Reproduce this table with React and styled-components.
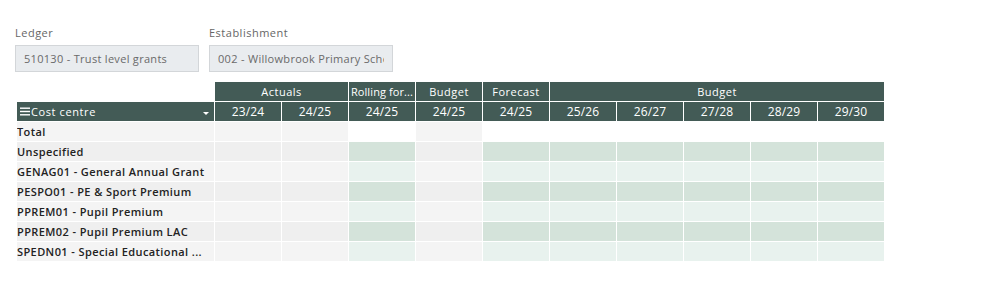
import React from "react";
import styled, { createGlobalStyle } from "styled-components";

const Global = createGlobalStyle`
  html, body { margin: 0; padding: 0; background: #fff; }
  body { font-family: "Open Sans", "Liberation Sans", sans-serif; }
`;

const Page = styled.div`
  padding: 26px 0 0 15px;
`;

const Filters = styled.div`
  display: flex;
  gap: 10px;
`;

const Field = styled.div`
  display: flex;
  flex-direction: column;
  width: 184px;
`;

const Label = styled.div`
  font-size: 11px;
  line-height: 14px;
  letter-spacing: 0.5px;
  color: #666;
  margin-bottom: 5px;
`;

const Input = styled.div`
  box-sizing: border-box;
  height: 27px;
  border: 1px solid #d3d6d9;
  background: #e9ecef;
  color: #6a6a6a;
  font-size: 11px;
  line-height: 25px;
  letter-spacing: 0.3px;
  padding: 0 8px;
`;

const InputText = styled.div`
  white-space: nowrap;
  overflow: hidden;
`;

const Grid = styled.div`
  margin: 10px 0 0 2px;
  display: grid;
  grid-template-columns: 197px repeat(10, 66px);
  grid-auto-rows: 19px;
  gap: 1px;
`;

const HeadCell = styled.div`
  grid-column: span ${(p) => p.$span || 1};
  background: ${(p) => (p.$blank ? "transparent" : "#435b56")};
  color: #fff;
  font-size: ${(p) => (p.$big ? "12px" : "11px")};
  letter-spacing: ${(p) => (p.$big ? "0.1px" : p.$tight ? "0.1px" : "0.5px")};
  line-height: 19px;
  text-align: center;
  white-space: nowrap;
  overflow: hidden;
`;

const CostHead = styled.div`
  background: #435b56;
  color: #fff;
  font-size: 11px;
  letter-spacing: 0.6px;
  line-height: 19px;
  display: flex;
  align-items: center;
  padding: 0 4px 0 3px;
  gap: 1px;
`;

const CostText = styled.span`
  flex: 1;
`;

const Caret = styled.span`
  width: 0;
  height: 0;
  border-left: 3px solid transparent;
  border-right: 3px solid transparent;
  border-top: 3px solid #fff;
  margin-right: 1px;
  margin-top: 3px;
`;

const RowLabel = styled.div`
  background: ${(p) => p.$bg};
  color: #222;
  font-size: 11px;
  font-weight: 600;
  letter-spacing: 0.4px;
  line-height: 19px;
  white-space: nowrap;
  overflow: hidden;
`;

const Cell = styled.div`
  background: ${(p) => p.$bg};
`;

const rows = [
  "Total",
  "Unspecified",
  "GENAG01 - General Annual Grant",
  "PESPO01 - PE & Sport Premium",
  "PPREM01 - Pupil Premium",
  "PPREM02 - Pupil Premium LAC",
  "SPEDN01 - Special Educational ...",
];

const years = ["23/24", "24/25", "24/25", "24/25", "24/25", "25/26", "26/27", "27/28", "28/29", "29/30"];
// column kinds: g = gray (actual/budget), e = editable green
const kinds = ["g", "g", "e", "g", "e", "e", "e", "e", "e", "e"];

function cellColor(rowIdx, kind) {
  if (rowIdx === 0) return kind === "g" ? "#f4f4f4" : "#ffffff";
  const dark = rowIdx % 2 === 1;
  if (kind === "g") return dark ? "#efefef" : "#f4f4f4";
  return dark ? "#d4e3da" : "#e8f2ee";
}

const Burger = () => (
  <svg width="10" height="9" viewBox="0 0 10 9">
    <rect x="0" y="0.5" width="10" height="1.4" fill="#fff" />
    <rect x="0" y="3.8" width="10" height="1.4" fill="#fff" />
    <rect x="0" y="7.1" width="10" height="1.4" fill="#fff" />
  </svg>
);

export default function App() {
  return (
    <Page>
      <Global />
      <Filters>
        <Field>
          <Label>Ledger</Label>
          <Input>
            <InputText>510130 - Trust level grants</InputText>
          </Input>
        </Field>
        <Field>
          <Label>Establishment</Label>
          <Input>
            <InputText>002 - Willowbrook Primary School</InputText>
          </Input>
        </Field>
      </Filters>
      <Grid>
        <HeadCell $blank />
        <HeadCell $span={2}>Actuals</HeadCell>
        <HeadCell $tight>Rolling for...</HeadCell>
        <HeadCell>Budget</HeadCell>
        <HeadCell>Forecast</HeadCell>
        <HeadCell $span={5}>Budget</HeadCell>

        <CostHead>
          <Burger />
          <CostText>Cost centre</CostText>
          <Caret />
        </CostHead>
        {years.map((y, i) => (
          <HeadCell key={i} $big>
            {y}
          </HeadCell>
        ))}

        {rows.map((r, ri) => (
          <React.Fragment key={r}>
            <RowLabel $bg={ri % 2 === 1 ? "#efefef" : "#f4f4f4"}>{r}</RowLabel>
            {kinds.map((k, ci) => (
              <Cell key={ci} $bg={cellColor(ri, k)} />
            ))}
          </React.Fragment>
        ))}
      </Grid>
    </Page>
  );
}
